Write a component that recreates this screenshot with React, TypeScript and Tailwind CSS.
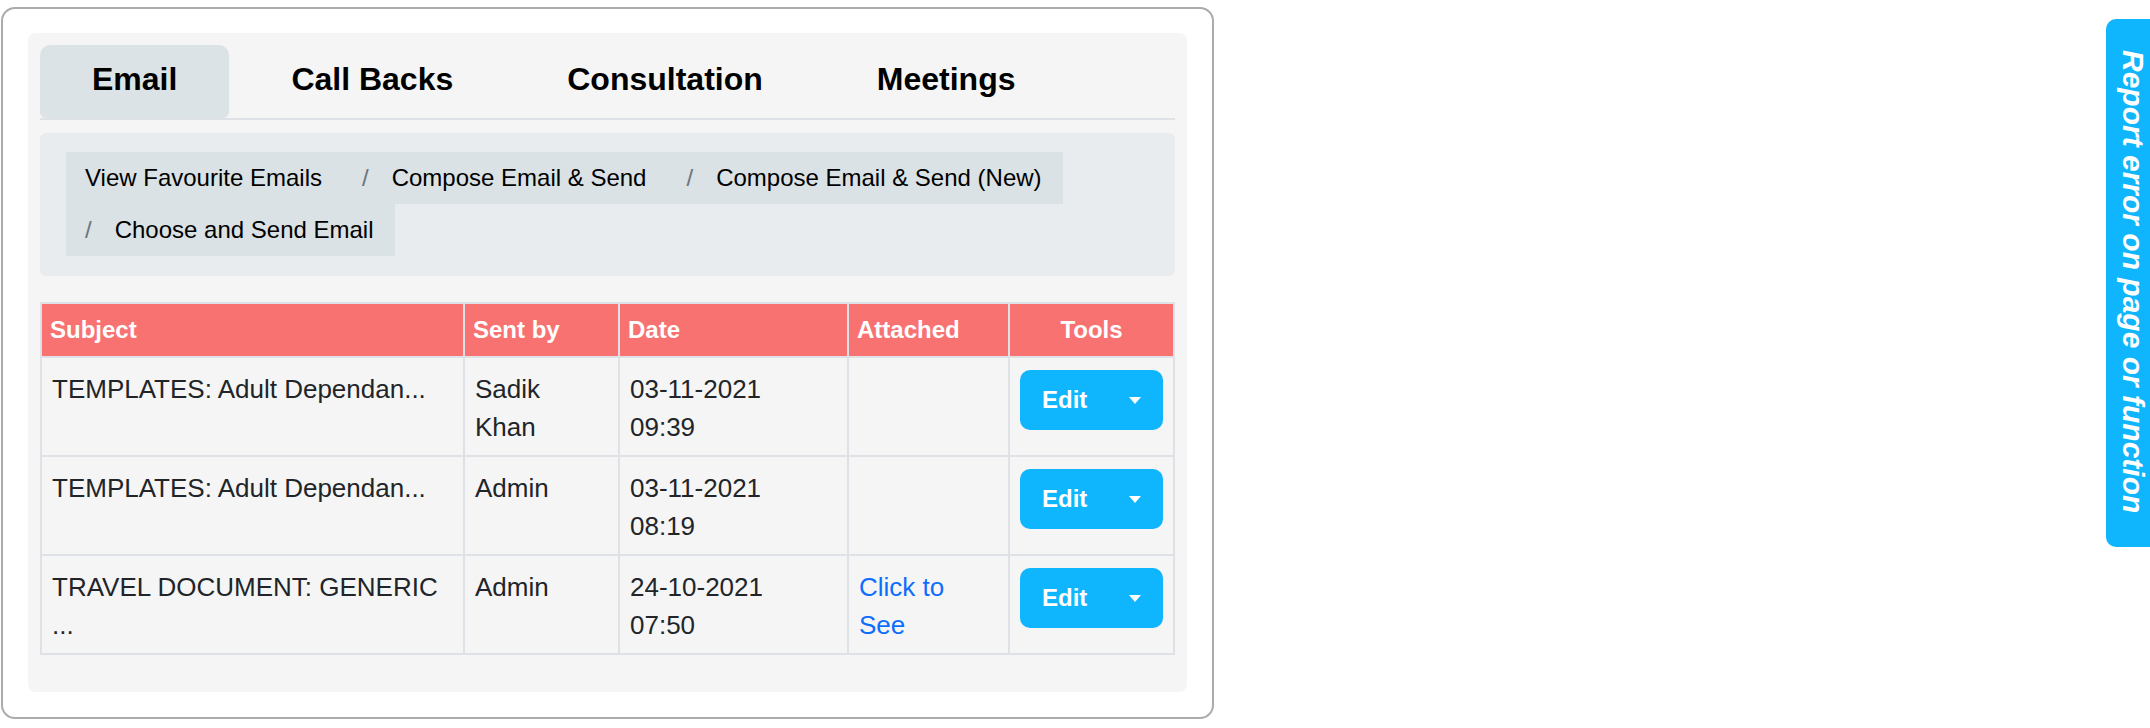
import React from 'react';

type EmailRow = {
  subject: React.ReactNode;
  sentBy: React.ReactNode;
  date: string;
  time: string;
  attached?: boolean;
};

const tabs = ['Email', 'Call Backs', 'Consultation', 'Meetings'];

const crumbs = [
  'View Favourite Emails',
  'Compose Email & Send',
  'Compose Email & Send (New)',
  'Choose and Send Email',
];

const rows: EmailRow[] = [
  { subject: 'TEMPLATES: Adult Dependan...', sentBy: <>Sadik<br />Khan</>, date: '03-11-2021', time: '09:39' },
  { subject: 'TEMPLATES: Adult Dependan...', sentBy: 'Admin', date: '03-11-2021', time: '08:19' },
  { subject: <>TRAVEL DOCUMENT: GENERIC<br />...</>, sentBy: 'Admin', date: '24-10-2021', time: '07:50', attached: true },
];

const EditButton: React.FC = () => (
  <button className="flex items-center justify-between w-full h-[60px] rounded-[10px] bg-[#0fb6fd] pl-[22px] pr-[22px] text-white text-[24px] font-bold">
    <span>Edit</span>
    <span className="w-0 h-0 border-x-[6px] border-t-[7px] border-x-transparent border-t-white" />
  </button>
);

const App: React.FC = () => {
  return (
    <div className="relative min-h-[728px] bg-white font-['Liberation_Sans',Arial,sans-serif] text-[#212529]">
      <div className="ml-[1px] mt-[7px] w-[1213px] h-[712px] rounded-[14px] border-2 border-[#ababab] px-[25px] pt-[24px] pb-[25px]">
        <div className="h-[659px] rounded-[8px] bg-[#f5f5f5] px-3 pt-3">
          {/* Tabs */}
          <div className="flex gap-[10px] border-b-2 border-[#dee2e6]">
            {tabs.map((tab, i) => (
              <div
                key={tab}
                className={
                  i === 0
                    ? 'h-[73px] px-[52px] pt-[10px] text-[32px] leading-[48px] font-bold text-black bg-[#dbe3e6] rounded-t-[10px] rounded-b-[6px]'
                    : 'h-[73px] px-[52px] pt-[10px] text-[32px] leading-[48px] font-bold text-black'
                }
              >
                {tab}
              </div>
            ))}
          </div>

          {/* Breadcrumb */}
          <div className="mt-[13px] rounded-[6px] bg-[#e9ecef] px-[26px] pt-[19px] pb-[20px]">
            <div className="flex flex-wrap">
              {crumbs.map((c, i) => (
                <div key={c} className="bg-[#dae2e5] pl-[19px] pr-[21px] py-2 text-[24px] leading-[36px] whitespace-nowrap text-black">
                  {i > 0 && <span className="pr-[23px] text-[#6c757d]">/</span>}
                  {c}
                </div>
              ))}
            </div>
          </div>

          {/* Email table */}
          <table className="mt-[26px] w-full table-fixed border-collapse">
            <colgroup>
              <col className="w-[423px]" />
              <col className="w-[155px]" />
              <col className="w-[229px]" />
              <col className="w-[161px]" />
              <col />
            </colgroup>
            <thead>
              <tr className="bg-[#f97272] text-white text-[24px] font-bold">
                <th className="h-[54px] border-2 border-[#dee2e6] px-[8px] text-left align-middle">Subject</th>
                <th className="h-[54px] border-2 border-[#dee2e6] px-[8px] text-left align-middle">Sent by</th>
                <th className="h-[54px] border-2 border-[#dee2e6] px-[8px] text-left align-middle">Date</th>
                <th className="h-[54px] border-2 border-[#dee2e6] px-[8px] text-left align-middle">Attached</th>
                <th className="h-[54px] border-2 border-[#dee2e6] px-[8px] text-center align-middle">Tools</th>
              </tr>
            </thead>
            <tbody className="text-[26px] leading-[38px]">
              {rows.map((r, i) => (
                <tr key={i}>
                  <td className="border-2 border-[#dee2e6] align-top pt-[12px] pb-[9px] px-[10px]">{r.subject}</td>
                  <td className="border-2 border-[#dee2e6] align-top pt-[12px] pb-[9px] px-[10px]">{r.sentBy}</td>
                  <td className="border-2 border-[#dee2e6] align-top pt-[12px] pb-[9px] px-[10px]">
                    {r.date}
                    <br />
                    {r.time}
                  </td>
                  <td className="border-2 border-[#dee2e6] align-top pt-[12px] pb-[9px] px-[10px]">
                    {r.attached && (
                      <a className="text-[#0d6efd]">
                        Click to
                        <br />
                        See
                      </a>
                    )}
                  </td>
                  <td className="border-2 border-[#dee2e6] align-top pt-[12px] pb-[9px] px-[10px]">
                    <EditButton />
                  </td>
                </tr>
              ))}
            </tbody>
          </table>
        </div>
      </div>

      {/* Report error side tab */}
      <div className="fixed right-0 top-[19px] w-[44px] h-[528px] rounded-l-[10px] bg-[#0fb6fd] pt-[31px] text-white text-[30px] leading-[34px] font-bold italic whitespace-nowrap [writing-mode:vertical-rl]">
        Report error on page or function
      </div>
    </div>
  );
};

export default App;
